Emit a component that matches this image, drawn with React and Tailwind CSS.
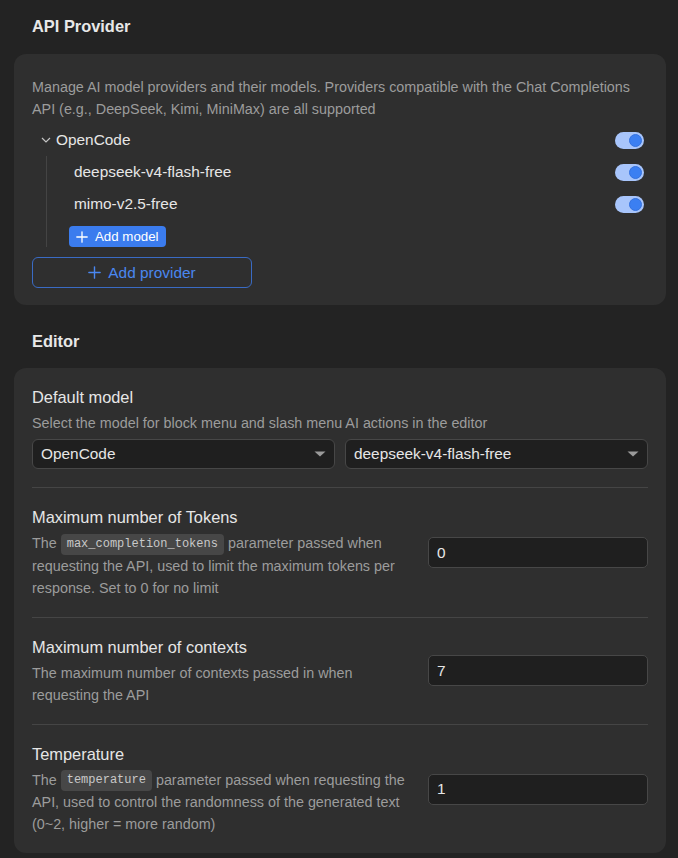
import React from "react";

const Toggle = () => (
  <div className="w-[29px] h-[17px] rounded-full bg-[#a8c5fb] flex items-center justify-end pr-[2px]">
    <div className="w-[13px] h-[13px] rounded-full bg-[#3b7ff2] border border-[#3472e0]" />
  </div>
);

const Caret = () => (
  <svg width="12" height="6" viewBox="0 0 12 6" className="shrink-0">
    <path d="M0.5 0.5 L11.5 0.5 L6 5.5 Z" fill="#9a9a9a" />
  </svg>
);

const Plus = ({ size = 12, color = "currentColor" }) => (
  <svg width={size} height={size} viewBox="0 0 12 12" fill="none" stroke={color} strokeWidth="1.3" strokeLinecap="round">
    <path d="M6 0.8 V11.2 M0.8 6 H11.2" />
  </svg>
);

const Select = ({ value }) => (
  <div className="flex-1 h-[30px] rounded-[6px] border border-[#474747] bg-[#1f1f1f] flex items-center justify-between pl-[8px] pr-[8px]">
    <span className="text-[15.4px] text-[#e6e6e6] leading-none">{value}</span>
    <Caret />
  </div>
);

const Input = ({ value }) => (
  <div className="w-[220px] shrink-0 h-[31px] rounded-[5px] border border-[#474747] bg-[#1f1f1f] flex items-center pl-[8px]">
    <span className="text-[15.4px] text-[#e6e6e6] leading-none">{value}</span>
  </div>
);

const Code = ({ children }) => (
  <code
    className="inline-block bg-[#474747] text-[#c9c9c9] text-[12px] leading-[21px] px-[6px] rounded-[4px] align-middle"
    style={{ fontFamily: '"Liberation Mono", "DejaVu Sans Mono", monospace' }}
  >
    {children}
  </code>
);

const Row = ({ title, children, value, border = true }) => (
  <div className={`flex items-center gap-[20px] py-[18px] ${border ? "border-t border-[#454545]" : ""}`}>
    <div className="flex-1 min-w-0">
      <div className="text-[16.4px] leading-[22px] text-[#e6e6e6]">{title}</div>
      <div className="mt-[4px] text-[14.35px] leading-[22px] text-[#9c9c9c]">{children}</div>
    </div>
    <Input value={value} />
  </div>
);

export default function App() {
  return (
    <div
      className="min-h-[858px] bg-[#232323] pl-[14px] pr-[12px] pt-[14px] pb-[6px]"
      style={{ fontFamily: '"Liberation Sans", Arial, sans-serif' }}
    >
      <h2 className="px-[18px] text-[16.4px] leading-[24px] font-bold text-[#e8e8e8]">API Provider</h2>
      <div className="mt-[16px] rounded-[12px] bg-[#2f2f2f] px-[18px] pt-[22px] pb-[17px]">
        <p className="text-[14.35px] leading-[22px] text-[#9c9c9c]">
          Manage AI model providers and their models. Providers compatible with the Chat Completions API (e.g., DeepSeek, Kimi, MiniMax) are all supported
        </p>
        <div className="mt-[4px] h-[32px] flex items-center justify-between pr-[4px]">
          <div className="flex items-center">
            <svg width="10" height="10" viewBox="0 0 10 10" fill="none" stroke="#c4c4c4" strokeWidth="1.2" className="ml-[9px] mr-[5px]">
              <path d="M1 3 L5 7 L9 3" />
            </svg>
            <span className="text-[15.4px] text-[#e6e6e6]">OpenCode</span>
          </div>
          <Toggle />
        </div>
        <div className="ml-[14px] border-l border-[#444444] pl-[22px] pb-0">
          <div className="h-[32px] flex items-center justify-between pr-[4px]">
            <span className="ml-[5px] text-[15.4px] text-[#e6e6e6]">deepseek-v4-flash-free</span>
            <Toggle />
          </div>
          <div className="h-[32px] flex items-center justify-between pr-[4px]">
            <span className="ml-[5px] text-[15.4px] text-[#e6e6e6]">mimo-v2.5-free</span>
            <Toggle />
          </div>
          <div className="pt-[6px]">
            <button className="h-[21px] px-[7px] rounded-[4px] bg-[#3b7cee] text-white text-[13.3px] flex items-center gap-[7px]">
              <Plus size={12} color="#ffffff" />
              <span>Add model</span>
            </button>
          </div>
        </div>
        <button className="mt-[10px] w-[220px] h-[31px] rounded-[6px] border border-[#3a6bc4] text-[#4a87f0] text-[15.4px] flex items-center justify-center gap-[7px]">
          <Plus size={13} color="#4a87f0" />
          <span>Add provider</span>
        </button>
      </div>

      <h2 className="mt-[24px] px-[18px] text-[16.4px] leading-[24px] font-bold text-[#e8e8e8]">Editor</h2>
      <div className="mt-[15px] rounded-[12px] bg-[#2f2f2f] px-[18px]">
        <div className="pt-[18px] pb-[18px]">
          <div className="text-[16.4px] leading-[22px] text-[#e6e6e6]">Default model</div>
          <div className="mt-[4px] text-[14.35px] leading-[22px] text-[#9c9c9c]">
            Select the model for block menu and slash menu AI actions in the editor
          </div>
          <div className="mt-[5px] flex gap-[10px]">
            <Select value="OpenCode" />
            <Select value="deepseek-v4-flash-free" />
          </div>
        </div>
        <Row title="Maximum number of Tokens" value="0">
          The <Code>max_completion_tokens</Code> parameter passed when requesting the API, used to limit the maximum tokens per response. Set to 0 for no limit
        </Row>
        <Row title="Maximum number of contexts" value="7">
          The maximum number of contexts passed in when requesting the API
        </Row>
        <Row title="Temperature" value="1">
          The <Code>temperature</Code> parameter passed when requesting the API, used to control the randomness of the generated text (0~2, higher = more random)
        </Row>
      </div>
    </div>
  );
}
